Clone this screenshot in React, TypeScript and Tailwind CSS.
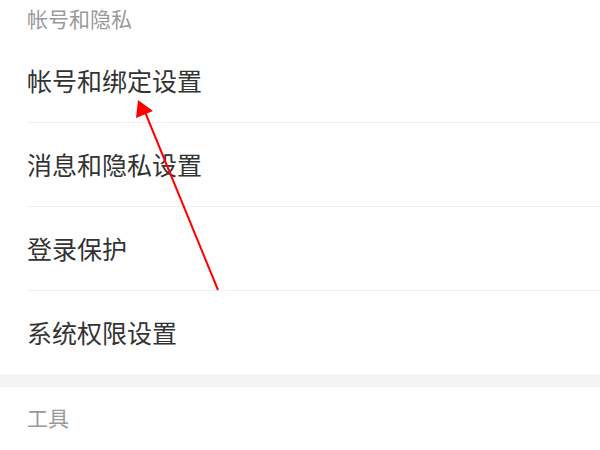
const rows = ['帐号和绑定设置', '消息和隐私设置', '登录保护', '系统权限设置'];

const font = { fontFamily: '"Noto Sans CJK SC", "Noto Sans", sans-serif' };

export default function App() {
  return (
    <div className="relative w-[600px] h-[450px] overflow-hidden bg-white" style={font}>
      <div className="h-[39px] pl-[27px] flex items-center text-[21px] text-[#999999] leading-none pb-[2px]">
        帐号和隐私
      </div>

      <div className="pl-[27px]">
        {rows.map((label, i) => (
          <div
            key={label}
            className={
              i < rows.length - 1
                ? 'h-[84px] flex items-center border-b border-[#efefef] text-[25px] text-[#333333] leading-none'
                : 'h-[83px] flex items-center text-[25px] text-[#333333] leading-none'
            }
          >
            {label}
          </div>
        ))}
      </div>

      <div className="h-[13px] bg-[#f4f4f4]"></div>

      <div className="h-[63px] pl-[27px] flex items-center text-[21px] text-[#999999] leading-none pb-[2px]">
        工具
      </div>

      {/* red annotation arrow */}
      <svg className="absolute left-0 top-0 pointer-events-none" width="600" height="450">
        <line x1="218" y1="290" x2="145" y2="112" stroke="#ff0000" strokeWidth="2" />
        <polygon points="138,100 136,118 153,111" fill="#ff0000" />
      </svg>
    </div>
  );
}
